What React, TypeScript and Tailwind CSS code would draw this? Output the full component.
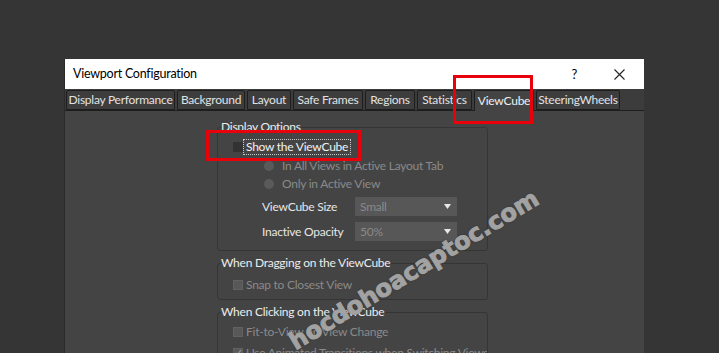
import React from "react";

const tabs: [string, number][] = [
  ["Display Performance", 109],
  ["Background", 68],
  ["Layout", 44],
  ["Safe Frames", 70],
  ["Regions", 50],
  ["Statistics", 55],
  ["ViewCube", 60],
  ["SteeringWheels", 84],
];

const Check = ({ dark = false, checked = false }: { dark?: boolean; checked?: boolean }) => (
  <span
    className={
      dark
        ? "w-[10px] h-[10px] bg-[#323232] shrink-0"
        : "w-[10px] h-[10px] bg-[#585858] border border-[#626262] shrink-0 flex items-center justify-center"
    }
  >
    {checked && (
      <svg width="8" height="8" viewBox="0 0 8 8">
        <path d="M1 4 L3 6 L7 1" stroke="#8a8a8a" strokeWidth="1.5" fill="none" />
      </svg>
    )}
  </span>
);

const Radio = ({ label }: { label: string }) => (
  <div className="flex items-center h-[18px] pl-[46px] gap-[8px]">
    <span className="w-[10px] h-[10px] rounded-full bg-[#5a5a5a] shrink-0" />
    <span className="text-[#8a8a8a] whitespace-nowrap">{label}</span>
  </div>
);

const Select = ({ value }: { value: string }) => (
  <div className="w-[102px] h-[19px] bg-[#575757] flex items-center justify-between pl-[5px] pr-[6px] text-[#8a8a8a]">
    <span>{value}</span>
    <svg width="7" height="5" viewBox="0 0 7 5">
      <path d="M0 0 H7 L3.5 5 Z" fill="#e8e8e8" />
    </svg>
  </div>
);

const Group = ({ title, children, className = "" }: { title: string; children: React.ReactNode; className?: string }) => (
  <fieldset className={"border border-[#353535] rounded-[3px] w-[271px] min-w-0 px-0 shrink-0 " + className}>
    <legend className="ml-[3px] px-0 text-[#ececec] leading-[14px] whitespace-nowrap">{title}</legend>
    {children}
  </fieldset>
);

export default function App() {
  return (
    <div
      className="w-[719px] h-[353px] bg-[#353535] overflow-hidden relative pt-[59px] pl-[64px] text-[12px] leading-[16px] tracking-[-0.25px]"
      style={{ fontFamily: 'Lato, "Liberation Sans", sans-serif' }}
    >
      <div className="w-[580px] h-[300px] flex flex-col bg-[#444444] border-l border-[#2a2a2a]">
        {/* title bar */}
        <div className="h-[30px] bg-white flex items-center pl-[8px] text-black shrink-0">
          <span className="text-[12.5px]">Viewport Configuration</span>
          <span className="ml-auto mr-[37px] text-[13px]">?</span>
          <svg width="11" height="11" viewBox="0 0 11 11" className="mr-[19px]">
            <path d="M0.5 0.5 L10.5 10.5 M10.5 0.5 L0.5 10.5" stroke="#222" strokeWidth="1.1" />
          </svg>
        </div>

        {/* tabs */}
        <div className="h-[22px] bg-[#3c3c3c] flex items-end pl-[1px] gap-[2px] border-b border-[#1e1e1e] shrink-0">
          {tabs.map(([t, w]) =>
            t === "ViewCube" ? (
              <div
                key={t}
                style={{ width: w }}
                className="h-[21px] -mb-px bg-[#444444] border border-b-0 border-[#1e1e1e] rounded-t-[2px] flex items-center justify-center whitespace-nowrap shrink-0 text-[#f0f0f0]"
              >
                {t}
              </div>
            ) : (
              <div
                key={t}
                style={{ width: w }}
                className="h-[20px] bg-[#3d3d3d] border border-[#1e1e1e] rounded-t-[2px] flex items-center justify-center whitespace-nowrap shrink-0 text-[#e2e2e2]"
              >
                {t}
              </div>
            )
          )}
        </div>

        {/* body */}
        <div className="flex-1 pl-[152px] pt-[9px] flex flex-col gap-[5px] overflow-hidden">
          <Group title="Display Options" className="pb-[9px]">
            <div className="flex items-center h-[18px] mt-[4px] pl-[15px]">
              <Check dark />
              <span className="px-[2px] border border-dotted border-[#c8c8c8] text-[#f2f2f2] leading-[14px]">
                Show the ViewCube
              </span>
            </div>
            <div className="mt-[1px]">
              <Radio label="In All Views in Active Layout Tab" />
              <Radio label="Only in Active View" />
            </div>
            <div className="flex items-center pl-[44px] mt-[4px] h-[19px]">
              <span className="w-[93px] text-[#e6e6e6]">ViewCube Size</span>
              <Select value="Small" />
            </div>
            <div className="flex items-center pl-[44px] mt-[6px] h-[19px]">
              <span className="w-[93px] text-[#e6e6e6]">Inactive Opacity</span>
              <Select value="50%" />
            </div>
          </Group>

          <Group title="When Dragging on the ViewCube" className="pb-[6px]">
            <div className="flex items-center h-[16px] mt-[7px] pl-[15px] gap-[3px]">
              <Check />
              <span className="text-[#8a8a8a]">Snap to Closest View</span>
            </div>
          </Group>

          <Group title="When Clicking on the ViewCube" className="pb-[8px]">
            <div className="flex items-center h-[16px] mt-[5px] pl-[15px] gap-[3px]">
              <Check />
              <span className="text-[#8a8a8a]">Fit-to-View on View Change</span>
            </div>
            <div className="flex items-center h-[16px] mt-[5px] pl-[15px] gap-[3px] overflow-hidden">
              <Check checked />
              <span className="text-[#8a8a8a] whitespace-nowrap">Use Animated Transitions when Switching Views</span>
            </div>
          </Group>
        </div>
      </div>

      {/* highlight boxes */}
      <div className="absolute left-[453px] top-[75px] w-[80px] h-[49px] border-[3px] border-[#e8000b]" />
      <div className="absolute left-[206px] top-[130px] w-[155px] h-[31px] border-[3px] border-[#e8000b]" />

      {/* watermark */}
      <div
        className="absolute left-[414px] top-[270px] -translate-x-1/2 -translate-y-1/2 -rotate-[31deg] whitespace-nowrap text-[24px] font-bold tracking-normal text-[#a2a2a2] [-webkit-text-stroke:1px_#a2a2a2]"
        style={{ fontFamily: '"DejaVu Sans", sans-serif', textShadow: "0 0 2px #2a2a2a" }}
      >
        hocdohoacaptoc.com
      </div>
    </div>
  );
}
